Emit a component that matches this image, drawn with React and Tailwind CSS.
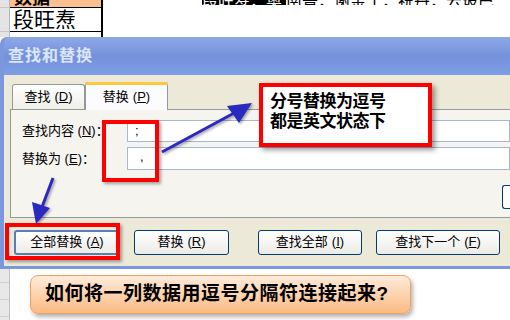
import React from 'react';

const U = ({ children }) => <span className="underline underline-offset-1">{children}</span>;

const XpButton = ({ label, hot, className }) => (
    <div
        className={`h-[25px] flex items-center justify-center rounded-[3px] border border-[#003C74] bg-gradient-to-b from-white to-[#ECEBE6] text-[13px] text-black ${className}`}
    >
        {label} <span className="ml-1">(<U>{hot}</U>)</span>
    </div>
);

const App = () => {
    return (
        <div
            className="relative w-[510px] h-[320px] overflow-hidden bg-white"
            style={{ fontFamily: '"Liberation Sans", "Noto Sans CJK SC", sans-serif' }}
        >
            {/* spreadsheet strip on top */}
            <div className="h-[37px] flex">
                <div className="w-[10px] bg-[#E4E4E4] border-r border-[#B8B8B8] flex flex-col">
                    <div className="h-[8px] border-b border-[#C8C8C8]" />
                    <div className="h-[24px] border-b border-[#C8C8C8]" />
                </div>
                <div className="w-[93px] border-r-2 border-black flex flex-col">
                    <div className="h-[8px] bg-[#FAC090] border-b border-black overflow-hidden">
                        <div className="text-[18px] leading-[18px] font-bold text-black pl-[4px] -mt-[11px]">数据</div>
                    </div>
                    <div className="h-[24px] border-b border-black text-[21px] leading-[24px] pl-[3px] text-black overflow-hidden">
                        段旺焘
                    </div>
                    <div className="flex-1 overflow-hidden text-[15px] leading-[14px] pl-[3px] text-black">.&nbsp;&nbsp;·&nbsp;&nbsp;·&nbsp;·</div>
                </div>
                <div className="flex-1 pl-[99px] overflow-hidden">
                    <div className="h-[10px] overflow-hidden whitespace-nowrap text-[16px] leading-[14px] -mt-[5px] flex">
                        <span className="bg-black text-white pr-[1px]">段旺焘，奥</span>
                        <span className="w-[3px] h-[12px] bg-black" />
                        <span className="text-black">南普，谢金丁，祝丹，云玻巴</span>
                    </div>
                </div>
            </div>

            {/* find & replace dialog */}
            <div className="h-[232px] rounded-t-[7px] bg-[#7C97DE] pl-[4px] pb-[3px] flex flex-col">
                <div className="h-[38px] flex items-center pl-[4px] rounded-tl-[6px] bg-gradient-to-b from-[#8FA9E6] via-[#7591DB] to-[#7E9FE6]">
                    <span className="text-[16px] font-bold text-[#DCE6FA] tracking-[1px]">查找和替换</span>
                </div>
                <div className="flex-1 bg-[#ECE9D8] flex flex-col pl-[6px] pt-[6px]">
                    {/* tabs */}
                    <div className="h-[28px] flex items-end pl-[2px] text-[13px] text-black">
                        <div className="w-[73px] h-[25px] bg-gradient-to-b from-white to-[#EFEEE7] border border-b-0 border-[#919B9C] rounded-t-[3px] flex items-center justify-center">
                            查找 <span className="ml-1">(<U>D</U>)</span>
                        </div>
                        <div className="relative w-[83px] h-[28px] -mb-px bg-[#FCFCFE] border border-b-0 border-[#919B9C] rounded-t-[3px] flex items-center justify-center z-10">
                            <div className="absolute -top-px -left-px -right-px h-[3px] rounded-t-[3px] bg-[#FFC83C]" />
                            替换 <span className="ml-1">(<U>P</U>)</span>
                        </div>
                    </div>
                    {/* tab panel */}
                    <div className="h-[109px] bg-[#F5F4EE] border border-[#919B9C] border-r-0 flex flex-col pt-[10px] gap-[5px] text-[13px] text-black">
                        <div className="flex items-center h-[22px]">
                            <span className="w-[116px] pl-[11px]">
                                查找内容 (<U>N</U>)：
                            </span>
                            <div className="flex-1 h-[22px] bg-white border border-[#A5B9D5] pl-[7px] leading-[19px]">;</div>
                        </div>
                        <div className="flex items-center h-[23px]">
                            <span className="w-[116px] pl-[11px]">
                                替换为 (<U>E</U>)：
                            </span>
                            <div className="flex-1 h-[23px] bg-white border border-[#A5B9D5] pl-[12px] leading-[18px]">,</div>
                        </div>
                        <div className="flex justify-end mt-[10px]">
                            <div className="w-[8px] h-[24px] border border-r-0 border-[#003C74] rounded-l-[3px] bg-white" />
                        </div>
                    </div>
                    {/* buttons */}
                    <div className="flex-1 flex items-center pl-[4px] gap-[14px]">
                        <XpButton label="全部替换" hot="A" className="w-[106px] border-2 border-[#5A7EB8]" />
                        <XpButton label="替换" hot="R" className="w-[95px]" />
                        <XpButton label="查找全部" hot="I" className="w-[104px] ml-[15px]" />
                        <XpButton label="查找下一个" hot="F" className="w-[124px]" />
                    </div>
                </div>
            </div>

            {/* spreadsheet below */}
            <div className="h-[51px] flex">
                <div className="w-[10px] bg-[#E8E8E8] border-r border-[#C0C0C0] flex flex-col">
                    <div className="h-[14px] border-b border-[#D0D0D0]" />
                    <div className="h-[17px] border-b border-[#D0D0D0]" />
                    <div className="h-[17px] border-b border-[#D0D0D0]" />
                </div>
            </div>

            {/* annotations over the dialog */}
            <div className="absolute left-[102px] top-[120px] w-[57px] h-[62px] border-[4px] border-[#FF0000] shadow-[2px_2px_3px_rgba(0,0,0,0.35)]" />
            <div className="absolute left-[5px] top-[223px] w-[115px] h-[37px] border-[4px] border-[#FF0000] shadow-[2px_2px_3px_rgba(0,0,0,0.35)]" />

            <div className="absolute left-[259px] top-[83px] w-[173px] h-[64px] border-[4px] border-[#FF0000] bg-white shadow-[3px_3px_5px_rgba(0,0,0,0.4)] pl-[7px] pt-[5px]">
                <p className="text-[17px] leading-[20px] font-bold text-black tracking-[-0.5px]">分号替换为逗号</p>
                <p className="text-[17px] leading-[20px] font-bold text-black tracking-[-0.5px]">都是英文状态下</p>
            </div>

            <div className="absolute left-[30px] top-[275px] w-[381px] h-[39px] rounded-[8px] border border-[#F0A060] bg-gradient-to-b from-[#FEEBDB] via-[#FDD3AE] to-[#FBBA82] shadow-[2px_3px_4px_rgba(0,0,0,0.3)] flex items-center pl-[14px]">
                <span className="text-[19px] font-bold text-black tracking-[0.5px]">如何将一列数据用逗号分隔符连接起来?</span>
            </div>

            <svg className="absolute left-0 top-0 pointer-events-none" width="510" height="320" viewBox="0 0 510 320">
                <defs>
                    <filter id="sh" x="-20%" y="-20%" width="140%" height="140%">
                        <feDropShadow dx="1.5" dy="1.5" stdDeviation="1.2" floodColor="#000" floodOpacity="0.35" />
                    </filter>
                </defs>
                <g fill="#2A2AC0" stroke="#2A2AC0" filter="url(#sh)">
                    <line x1="162" y1="152" x2="236" y2="112" strokeWidth="3" />
                    <polygon points="252,103 227,106 239,123" stroke="none" />
                    <line x1="53" y1="178" x2="42" y2="207" strokeWidth="3" />
                    <polygon points="36,224 32,202 50,208" stroke="none" />
                </g>
            </svg>
        </div>
    );
};

export default App;
